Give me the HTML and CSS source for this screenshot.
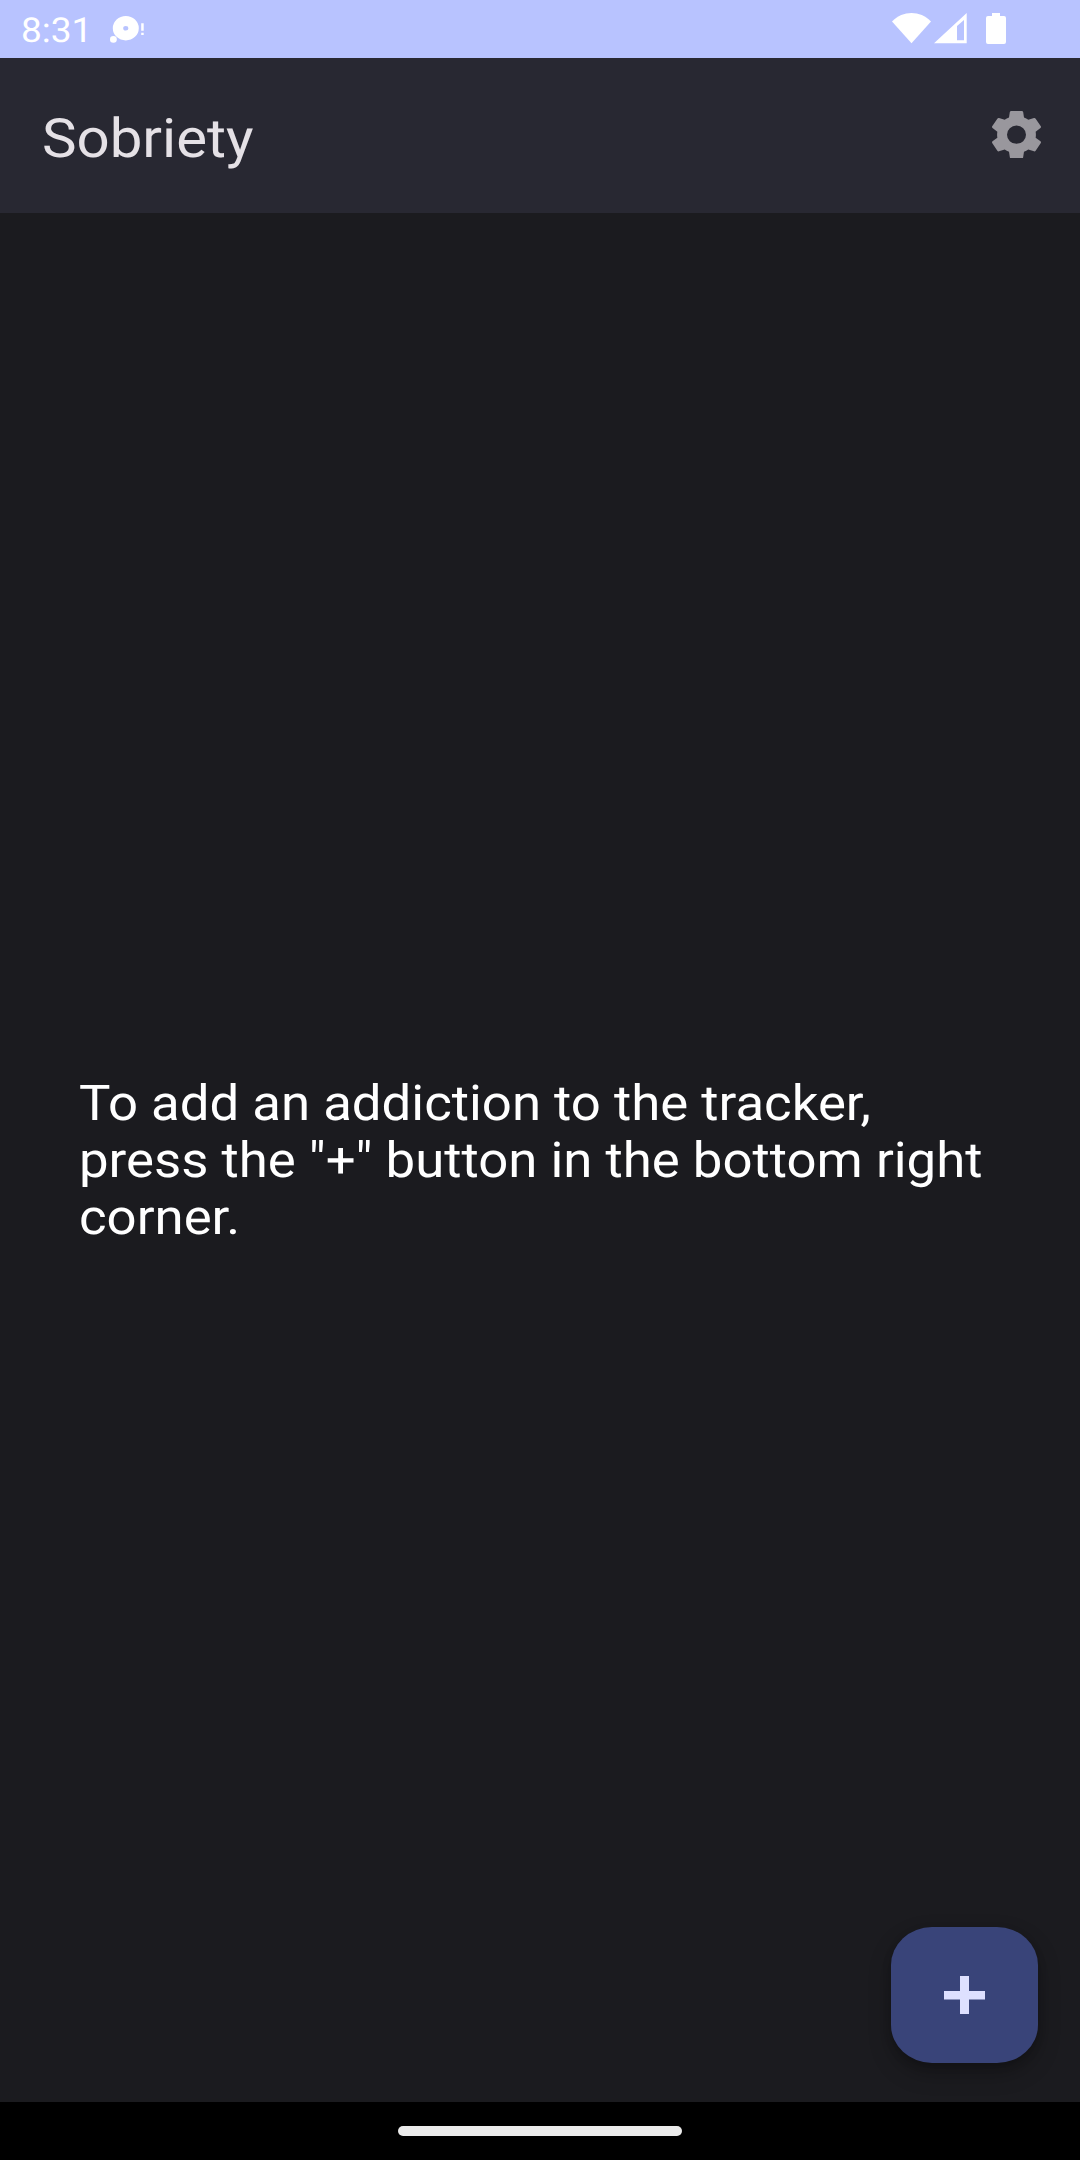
FILE: index.html
```html
<!DOCTYPE html>
<html lang="en">
<head>
<meta charset="utf-8">
<title>Sobriety</title>
<link rel="stylesheet" href="styles.css">
</head>
<body>
<div class="screen">
  <div class="status-bar">
    <span class="clock">8:31</span>
    <svg class="notification" viewBox="0 0 36 28">
      <path fill-rule="evenodd" d="M15.8 0a13 12.2 0 1 1 0 24.4a13 12.2 0 1 1 0-24.4zm0 10a2.6 2.3 0 1 0 0 4.6a2.6 2.3 0 1 0 0-4.6z"/>
      <ellipse cx="3.4" cy="23.4" rx="3.4" ry="3.3"/>
      <path d="M31.2 7.2h2.5v7.6h-2.5zM31.2 16.8h2.5v2.3h-2.5z"/>
    </svg>
    <div class="system-icons">
      <svg class="wifi" viewBox="0 0 39 31"><path d="M0 8.4C11 -2.8 28 -2.8 39 8.4L19.5 30.3z"/></svg>
      <svg class="signal" viewBox="0 0 33 31"><path fill-rule="evenodd" d="M0 30.3L32.7 0V30.3zM23 13V27.3h7V7z"/></svg>
      <svg class="battery" viewBox="0 0 20 31"><path d="M6 0h8v3h4q2 0 2 2v24q0 2-2 2H2q-2 0-2-2V5q0-2 2-2h4z"/></svg>
    </div>
  </div>
  <header class="app-bar">
    <h1 class="title">Sobriety</h1>
    <svg class="settings" viewBox="0 0 147 142">
      <path fill-rule="evenodd" d="M58 0H89Q93 0 93.500 3L96 19.500Q103 22 109 26.500L126 21Q129 20 131 23L146.500 46Q148 49 145.500 51L131 62Q132.500 71 131 80L145.500 91Q148 93 146.500 96L131 119Q129 122 126 121L109 115.500Q103 120 96 122.500L93.500 139Q93 142 89 142H58Q54 142 53.500 139L51 122.500Q44 120 38 115.500L21 121Q18 122 16 119L.5 96Q-1 93 1.500 91L16 80Q14.500 71 16 62L1.500 51Q-1 49 .5 46L16 23Q18 20 21 21L38 26.500Q44 22 51 19.500L53.500 3Q54 0 58 0zM73.500 43.500a28.500 27.500 0 1 0 0 55a28.500 27.500 0 1 0 0-55z"/>
    </svg>
  </header>
  <main class="content">
    <p class="hint">To add an addiction to the tracker,<br>press the "+" button in the bottom right<br>corner.</p>
    <button class="fab" aria-label="Add">
      <svg class="plus" viewBox="0 0 41 38"><path d="M16 0h9v15h16v8.500H25V38h-9V23.500H0V15h16z"/></svg>
    </button>
  </main>
  <div class="nav-bar"><div class="handle"></div></div>
</div>
</body>
</html>
```
FILE: styles.css
```css
* { box-sizing: border-box; margin: 0; padding: 0; }
body { font-family: Roboto, sans-serif; background: #1b1b1f; text-rendering: geometricPrecision; }
svg { display: block; fill: #fff; flex: none; }
.screen { width: 1080px; height: 2160px; display: flex; flex-direction: column; overflow: hidden; }
.status-bar { height: 58px; flex: none; display: flex; align-items: flex-start; background: #b8c3ff; color: #fff; padding: 0 74px 0 21px; }
.clock { width: 89px; font-size: 34.500px; line-height: 40px; margin-top: 11px; transform: scaleX(1.074); transform-origin: left; white-space: nowrap; }
.notification { width: 36px; height: 28px; margin-top: 16px; }
.system-icons { display: flex; align-items: flex-start; margin: 13px 0 0 auto; }
.wifi { width: 39px; height: 31px; }
.signal { width: 33px; height: 31px; margin-left: 3px; }
.battery { width: 20px; height: 31px; margin-left: 19px; }
.app-bar { height: 155px; flex: none; display: flex; justify-content: space-between; align-items: flex-start; background: #282832; padding: 0 39px 0 42px; }
.title { font-size: 54.200px; font-weight: 400; line-height: 62px; color: #e5e1e6; margin-top: 51px; transform: scaleX(1.073); transform-origin: left; }
.settings { width: 49px; height: 47.300px; fill: #99979d; margin-top: 53px; }
.content { flex: 1; display: flex; flex-direction: column; justify-content: space-between; padding: 863px 42px 39px 79px; }
.hint { font-size: 49.200px; line-height: 57px; color: #fff; white-space: nowrap; transform: scaleX(1.072); transform-origin: left; align-self: flex-start; }
.fab { width: 147px; height: 136px; align-self: flex-end; display: flex; align-items: center; justify-content: center; border: 0; border-radius: 41px / 38px; background: #394479; box-shadow: 0 10px 22px rgba(0, 0, 0, .25), 0 3px 8px rgba(0, 0, 0, .15); }
.plus { width: 41px; height: 38px; fill: #dee0ff; }
.nav-bar { height: 58px; flex: none; display: flex; justify-content: center; align-items: center; background: #000; }
.handle { width: 284px; height: 10px; border-radius: 5px; background: #ebebeb; }
```
